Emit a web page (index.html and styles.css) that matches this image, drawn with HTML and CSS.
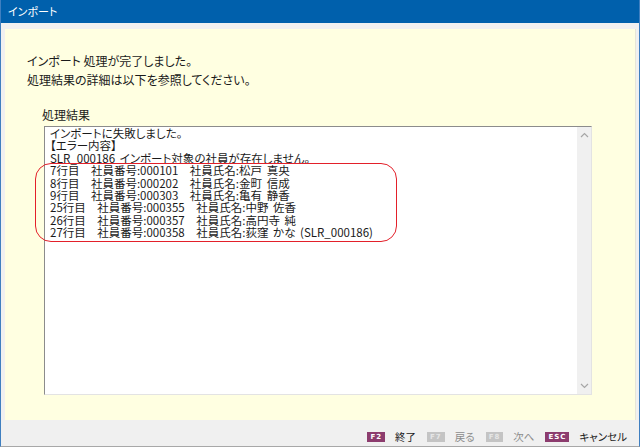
FILE: index.html
```html
<!DOCTYPE html>
<html lang="ja">
<head>
    <meta charset="UTF-8">
    <title>インポート</title>
    <link rel="stylesheet" href="styles.css">
</head>
<body>
    <div id="window">
        <div id="titlebar">インポート</div>
        <div id="main">
            <div id="panel">
                <div class="message">インポート 処理が完了しました。</div>
                <div class="message">処理結果の詳細は以下を参照してください。</div>
                <div id="result-label">処理結果</div>
                <div id="result-box">
                    <div id="result-text">
                        <div>インポートに失敗しました。</div>
                        <div>【エラー内容】</div>
                        <div>SLR_000186 インポート対象の社員が存在しません。</div>
                        <div>7行目　社員番号:000101　社員氏名:松戸 真央</div>
                        <div>8行目　社員番号:000202　社員氏名:金町 信成</div>
                        <div>9行目　社員番号:000303　社員氏名:亀有 静香</div>
                        <div>25行目　社員番号:000355　社員氏名:中野 佐香</div>
                        <div>26行目　社員番号:000357　社員氏名:高円寺 純</div>
                        <div>27行目　社員番号:000358　社員氏名:荻窪 かな (SLR_000186)</div>
                    </div>
                    <div id="scrollbar">
                        <svg width="9" height="6" viewBox="0 0 9 6"><path d="M1 5 L4.5 1.5 L8 5" fill="none" stroke="#a6a6a6" stroke-width="1.2"/></svg>
                        <svg width="9" height="6" viewBox="0 0 9 6"><path d="M1 1 L4.5 4.5 L8 1" fill="none" stroke="#a6a6a6" stroke-width="1.2"/></svg>
                    </div>
                    <div id="highlight"></div>
                </div>
            </div>
        </div>
        <div id="footer">
            <div class="fkey"><span class="badge">F2</span><span class="label">終了</span></div>
            <div class="fkey disabled"><span class="badge">F7</span><span class="label">戻る</span></div>
            <div class="fkey disabled"><span class="badge">F8</span><span class="label">次へ</span></div>
            <div class="fkey"><span class="badge">ESC</span><span class="label">キャンセル</span></div>
        </div>
    </div>
</body>
</html>
```

FILE: styles.css
```css
* {
    margin: 0;
    padding: 0;
    box-sizing: border-box;
}

body {
    width: 640px;
    height: 447px;
    background-color: #f0f0f0;
    font-family: "Noto Sans CJK JP", "Noto Sans", sans-serif;
    font-feature-settings: "palt";
    color: #1a1a1a;
    overflow: hidden;
}

#window {
    height: 447px;
    border-left: 1px solid #3f7fc0;
    border-right: 1px solid #3f7fc0;
    border-bottom: 1px solid #a8a8a8;
    display: flex;
    flex-direction: column;
}

#titlebar {
    height: 23px;
    background-color: #0060ac;
    color: white;
    font-size: 11px;
    line-height: 23px;
    padding-left: 7px;
}

#main {
    padding: 6px 3px 0 4px;
}

#panel {
    height: 391px;
    background-color: #ffffe1;
    border-right: 1px solid #e6e6d8;
    padding: 22px 0 0 22px;
}

.message {
    font-size: 12px;
    line-height: 19px;
}

#result-label {
    font-size: 12px;
    line-height: 16px;
    margin: 18px 0 0 15px;
}

#result-box {
    position: relative;
    margin: 3px 0 0 17px;
    width: 548px;
    height: 269px;
    background-color: white;
    border-top: 1px solid #8c8c8c;
    border-left: 1px solid #8c8c8c;
    border-right: 1px solid #e3e3e3;
    border-bottom: 1px solid #e3e3e3;
    display: flex;
}

#result-text {
    flex: 1;
    padding: 0 0 0 5px;
    font-size: 11.5px;
    line-height: 12.4px;
    white-space: nowrap;
    word-spacing: 2px;
}

#scrollbar {
    width: 14px;
    background-color: #f0f0f0;
    display: flex;
    flex-direction: column;
    justify-content: space-between;
    align-items: center;
    padding: 5px 0 5px;
}

#highlight {
    position: absolute;
    left: -10px;
    top: 36px;
    width: 362px;
    height: 79px;
    border: 1.5px solid #e3202a;
    border-radius: 16px;
}

#footer {
    flex: 1;
    display: flex;
    justify-content: flex-end;
    align-items: center;
    gap: 11px;
    padding: 8px 12px 0 0;
}

.fkey {
    display: flex;
    align-items: center;
    gap: 10px;
}

.badge {
    height: 10px;
    min-width: 17px;
    padding: 0 3px;
    background-color: #8c3c6e;
    color: white;
    font-family: "DejaVu Sans", sans-serif;
    font-size: 7px;
    font-weight: bold;
    line-height: 10px;
    text-align: center;
    letter-spacing: 1px;
}

.label {
    font-size: 10.5px;
    line-height: 14px;
}

.disabled .badge {
    background-color: #c4c4c4;
    color: #e6e6e6;
}

.disabled .label {
    color: #8c8c8c;
}
```
